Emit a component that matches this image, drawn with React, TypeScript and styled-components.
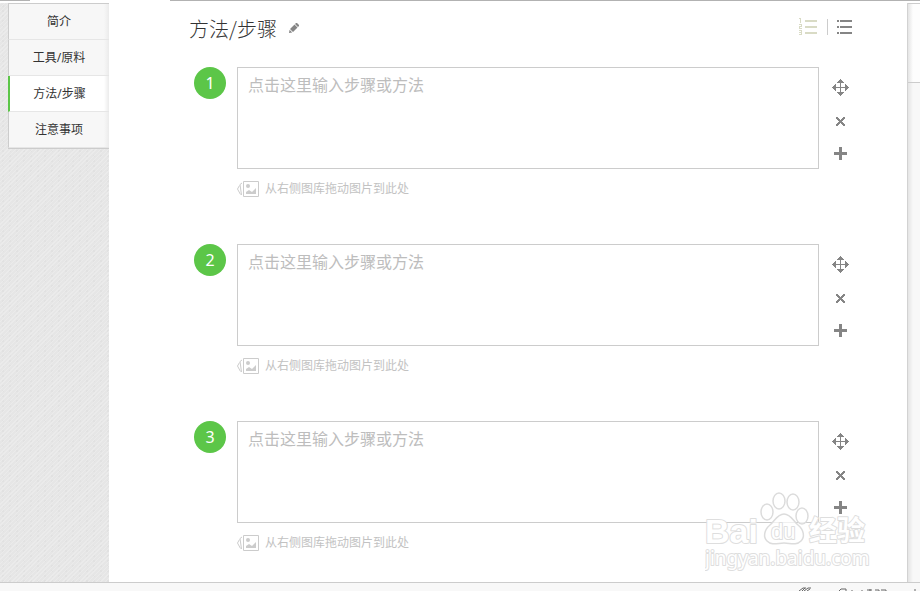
import React from 'react';
import styled, { createGlobalStyle } from 'styled-components';

const GlobalStyle = createGlobalStyle`
  * { box-sizing: border-box; }
  body {
    margin: 0;
    overflow: hidden;
    background: #fff;
    color: #333;
    font-family: "Noto Sans", "Noto Sans CJK SC", sans-serif;
    font-size: 12px;
  }
`;

const Page = styled.div`
  display: flex;
  flex-direction: column;
  height: 100vh;
  overflow: hidden;
`;

const TopEdge = styled.header`
  flex: none;
  display: flex;
  justify-content: space-between;
  height: 3px;
`;

const EdgeLine = styled.span<{ $grow?: boolean }>`
  height: 1px;
  background: #b2b2b2;
  width: 30px;
  ${(p) => p.$grow && 'width: auto; flex: 1; margin-left: 140px;'}
`;

const Body = styled.div`
  flex: 1;
  min-height: 0;
  display: flex;
`;

const Sidebar = styled.aside`
  flex: none;
  width: 109px;
  padding-left: 8px;
  background-color: #e6e6e6;
  background-image:
    repeating-linear-gradient(135deg, #ebebeb 0 1px, transparent 1px 3px),
    radial-gradient(circle at 3px 3px, #e1e1e1 0 1px, transparent 1px);
  background-size: auto, 7px 5px;
`;

const Nav = styled.nav`
  display: flex;
  flex-direction: column;
  border-top: 1px solid #ccc;
  border-bottom: 1px solid #ccc;
`;

const NavItem = styled.a<{ $active?: boolean }>`
  display: flex;
  align-items: center;
  justify-content: center;
  height: 36px;
  padding-bottom: 1px;
  border-left: ${(p) => (p.$active ? '2px solid #5cc648' : '1px solid #ccc')};
  border-bottom: 1px solid #e6e6e6;
  background: linear-gradient(to left, #ebebeb, ${(p) => (p.$active ? '#fff' : '#f7f7f7')} 5px);
  color: #333;
  text-decoration: none;
`;

const Main = styled.main`
  position: relative;
  flex: 1;
  min-width: 0;
  overflow: hidden;
  padding: 12px 55px 0 80px;
`;

const TitleRow = styled.div`
  display: flex;
  align-items: center;
  height: 26px;
  margin-bottom: 26px;
`;

const Title = styled.h1`
  margin: 0;
  font-family: "Noto Sans CJK SC", sans-serif;
  font-size: 20px;
  line-height: 32px;
  font-weight: 300;
  padding-top: 2px;
`;

const IconButton = styled.button`
  display: flex;
  padding: 0;
  border: 0;
  background: none;
  cursor: pointer;
`;

const EditButton = styled(IconButton)`
  margin-left: 12px;
`;

const ListTools = styled.div`
  display: flex;
  align-items: center;
  height: 24px;
  margin: 0 0 2px auto;
`;

const Divider = styled.span`
  width: 1px;
  height: 16px;
  margin: 0 9px 0 10px;
  background: #ccc;
`;

const Steps = styled.ol`
  list-style: none;
  margin: 0;
  padding: 0 2px 0 5px;
  display: flex;
  flex-direction: column;
  gap: 47px;
`;

const Step = styled.li`
  display: grid;
  grid-template-columns: 32px 1fr 20px;
  column-gap: 11px;
`;

const StepNumber = styled.label`
  width: 32px;
  height: 32px;
  border-radius: 50%;
  background: #5cc648;
  color: #fff;
  font-size: 16px;
  line-height: 32px;
  text-align: center;
`;

const StepInput = styled.textarea`
  display: block;
  width: 100%;
  height: 102px;
  padding: 5px 10px;
  border: 1px solid #ccc;
  resize: none;
  outline: 0;
  background: #fff;
  color: #333;
  font-family: inherit;
  font-size: 16px;
  line-height: 24px;
  &::placeholder { color: #bdbdbd; opacity: 1; }
`;

const DropHint = styled.div`
  display: flex;
  align-items: center;
  gap: 6px;
  height: 16px;
  margin-top: 12px;
  color: #c2c2c2;
  line-height: 16px;
`;

const Actions = styled.div`
  display: flex;
  flex-direction: column;
  align-items: center;
  padding-top: 12px;
`;

const ActionButton = styled(IconButton)<{ $gap: number }>`
  margin-bottom: ${(p) => p.$gap}px;
`;

const Watermark = styled.svg`
  position: absolute;
  right: 34px;
  bottom: 6px;
  pointer-events: none;
`;

const ScrollRail = styled.aside`
  flex: none;
  width: 13px;
  border-left: 1px solid #d2d2d2;
  background: linear-gradient(to right, #e4e4e4, #f8f8f8 5px);
`;

const ScrollPanel = styled.div`
  height: 80px;
  border-top: 1px solid #ccc;
  border-bottom: 1px solid #ccc;
  background: linear-gradient(to right, #e4e4e4, #fdfdfd 5px);
`;

const Footer = styled.footer`
  flex: none;
  display: flex;
  justify-content: flex-end;
  height: 9px;
  border-top: 1px solid #ccc;
  background: #f8f8f8;
`;

const NumberedIcon = () => (
  <svg width="18" height="18" viewBox="0 0 18 18" fill="#d9dbc5" shapeRendering="crispEdges" aria-hidden="true">
    <path d="M6 2h12v2H6zM6 8h12v2H6zM6 14h12v2H6z" />
    <path d="M0 0h2v5H1V1H0zM0 6h3v3H1v1h2v1H0V8h2V7H0zM0 12h3v5H0v-1h2v-1H0v-1h2v-1H0z" />
  </svg>
);

const BulletIcon = () => (
  <svg width="15" height="18" viewBox="0 0 15 18" fill="#858585" shapeRendering="crispEdges" aria-hidden="true">
    <path d="M0 2h2v2H0zM3 2h12v2H3zM0 8h2v2H0zM3 8h12v2H3zM0 14h2v2H0zM3 14h12v2H3z" />
  </svg>
);

const PencilIcon = () => (
  <svg width="10" height="10" viewBox="0 0 10 10" fill="#858585" aria-hidden="true">
    <path d="M7 0h1l2 2v1L9 4 6 1zM5.5 1.5l3 3L4 9 1 6zM.6 6.8l2.6 2.6L0 10z" />
  </svg>
);

const MoveIcon = () => (
  <svg width="17" height="17" viewBox="0 0 17 17" fill="#858585" shapeRendering="crispEdges" aria-hidden="true">
    <path d="M8 0h1v1h1v1h1v1h1v1H9v4h4V5h1v1h1v1h1v1h1v1h-1v1h-1v1h-1v1h-1V9H9v4h3v1h-1v1h-1v1H9v1H8v-1H7v-1H6v-1H5v-1h3V9H4v3H3v-1H2v-1H1V9H0V8h1V7h1V6h1V5h1v3h4V4H5V3h1V2h1V1h1z" />
  </svg>
);

const RemoveIcon = () => (
  <svg width="9" height="9" viewBox="0 0 9 9" fill="#858585" shapeRendering="crispEdges" aria-hidden="true">
    <path d="M0 0h2v1h1v1h1v1h1V2h1V1h1V0h2v2H8v1H7v1H6v1h1v1h1v1h1v2H7V8H6V7H5V6H4v1H3v1H2v1H0V7h1V6h1V5h1V4H2V3H1V2H0z" />
  </svg>
);

const AddIcon = () => (
  <svg width="13" height="13" viewBox="0 0 13 13" fill="#858585" shapeRendering="crispEdges" aria-hidden="true">
    <path d="M5 0h3v5h5v3H8v5H5V8H0V5h5z" />
  </svg>
);

const PictureIcon = () => (
  <svg width="22" height="16" viewBox="0 0 22 16" fill="none" stroke="#ccc" aria-hidden="true">
    <path d="M6.5.5h15v15h-15z" />
    <path d="M5 2 3 3.500l1.500 10.500M2.500 4.500.5 8l3 5.500" />
    <circle cx="11" cy="5" r="2" fill="#ccc" stroke="none" />
    <path d="M9 13v-2l3-2 3 2 4-4v6z" fill="#ccc" stroke="none" />
  </svg>
);

const BaiduMark = () => (
  <Watermark width="168" height="86" viewBox="0 0 168 86" role="img" aria-label="Baidu 经验">
    <g fill="#fff" fillOpacity="0.7" stroke="#dcdcdc" strokeWidth="1.500">
      <ellipse cx="62" cy="22" rx="6" ry="8" />
      <ellipse cx="74" cy="11" rx="6" ry="8" />
      <ellipse cx="88" cy="12" rx="6" ry="8" />
      <ellipse cx="97" cy="26" rx="6" ry="8" />
      <path d="M79 24c-7 0-9 7-14 11-6 5-7 12-3 16 5 5 11 2 17 2s12 3 17-2c4-4 3-11-3-16-5-4-7-11-14-11z" />
    </g>
    <g fill="#fff" stroke="#dedede" strokeWidth="2" strokeLinejoin="round" paintOrder="stroke" fontWeight="700">
      <text x="0" y="53" fontFamily="Liberation Sans, sans-serif" fontSize="34">Bai</text>
      <text x="66" y="49" fontFamily="Liberation Sans, sans-serif" fontSize="22" fontWeight="400">du</text>
      <text x="104" y="51" fontFamily="Noto Sans CJK SC, sans-serif" fontSize="28">经验</text>
      <text x="0" y="75" fontFamily="Noto Sans, sans-serif" fontSize="19" fontWeight="400">jingyan.baidu.com</text>
    </g>
  </Watermark>
);

const FooterMarks = () => (
  <svg width="122" height="8" viewBox="0 0 122 8" fill="none" stroke="#666" aria-hidden="true">
    <path d="M1 8l4-3h3M4 8l3-3M6 8l4-3h3M9 8l3-2M41 8l2-2h5v2M54 7v1M64 7v1M72 6v2M69 7h5M77 7h4v1M83 7h5v1M117 6v2" />
  </svg>
);

const sections = ['简介', '工具/原料', '方法/步骤', '注意事项'];
const current = '方法/步骤';
const steps = [1, 2, 3];

export default function App() {
  return (
    <Page>
      <GlobalStyle />
      <TopEdge>
        <EdgeLine />
        <EdgeLine $grow />
      </TopEdge>
      <Body>
        <Sidebar>
          <Nav>
            {sections.map((name) => (
              <NavItem key={name} href="#" $active={name === current}>{name}</NavItem>
            ))}
          </Nav>
        </Sidebar>
        <Main>
          <TitleRow>
            <Title>方法/步骤</Title>
            <EditButton aria-label="编辑标题"><PencilIcon /></EditButton>
            <ListTools>
              <IconButton aria-label="有序列表"><NumberedIcon /></IconButton>
              <Divider />
              <IconButton aria-label="无序列表"><BulletIcon /></IconButton>
            </ListTools>
          </TitleRow>
          <Steps>
            {steps.map((n) => (
              <Step key={n}>
                <StepNumber htmlFor={`step-${n}`}>{n}</StepNumber>
                <div>
                  <StepInput id={`step-${n}`} placeholder="点击这里输入步骤或方法" />
                  <DropHint><PictureIcon />从右侧图库拖动图片到此处</DropHint>
                </div>
                <Actions>
                  <ActionButton $gap={21} aria-label="移动"><MoveIcon /></ActionButton>
                  <ActionButton $gap={21} aria-label="删除"><RemoveIcon /></ActionButton>
                  <ActionButton $gap={0} aria-label="添加"><AddIcon /></ActionButton>
                </Actions>
              </Step>
            ))}
          </Steps>
          <BaiduMark />
        </Main>
        <ScrollRail><ScrollPanel /></ScrollRail>
      </Body>
      <Footer><FooterMarks /></Footer>
    </Page>
  );
}
